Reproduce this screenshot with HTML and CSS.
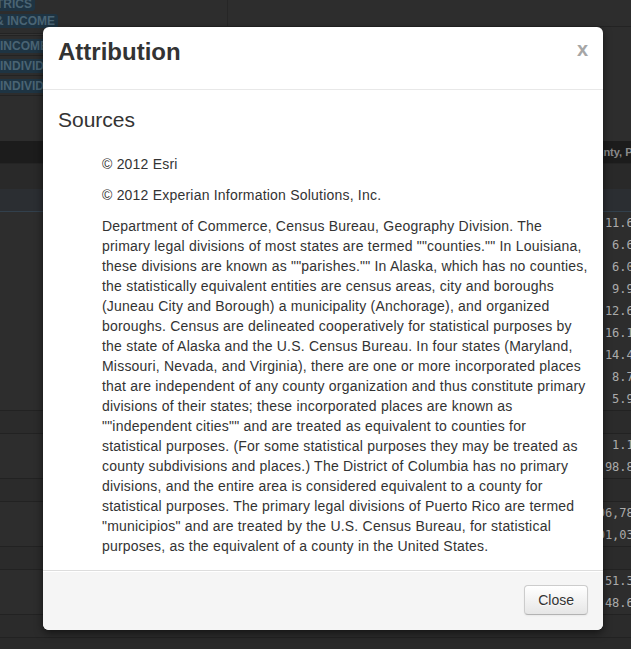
FILE: index.html
```html
<!DOCTYPE html>
<html lang="en">
<head>
<meta charset="utf-8">
<title>Attribution</title>
<link rel="stylesheet" href="styles.css">
</head>
<body>
<div class="app">
  <div class="top">
    <div class="side">
      <span class="badge b1">METRICS</span>
      <span class="badge b2">&amp; INCOME</span>
      <div class="rule double"></div>
      <span class="badge b3">INCOME</span>
      <div class="rule"></div>
      <span class="badge b3">INDIVIDUALS</span>
      <div class="rule"></div>
      <span class="badge b3">INDIVIDUALS</span>
      <div class="rule"></div>
    </div>
    <div class="top-main">
      <div class="strip"><div class="strip-left"></div><div class="strip-right"></div></div>
    </div>
  </div>
  <div class="thead"><span class="th">County, Population</span></div>
  <div class="row row-a"></div>
  <div class="row row-b"></div>
  <div class="row data"><span class="num">11.60</span></div>
  <div class="row data"><span class="num">6.64</span></div>
  <div class="row data"><span class="num">6.04</span></div>
  <div class="row data"><span class="num">9.96</span></div>
  <div class="row data"><span class="num">12.62</span></div>
  <div class="row data"><span class="num">16.10</span></div>
  <div class="row data"><span class="num">14.40</span></div>
  <div class="row data"><span class="num">8.72</span></div>
  <div class="row data"><span class="num">5.95</span></div>
  <div class="row group"></div>
  <div class="row data"><span class="num">1.14</span></div>
  <div class="row data"><span class="num">98.86</span></div>
  <div class="row group"></div>
  <div class="row data"><span class="num">$106,789</span></div>
  <div class="row data"><span class="num">$101,035</span></div>
  <div class="row group"></div>
  <div class="row data"><span class="num">51.38</span></div>
  <div class="row data"><span class="num">48.62</span></div>
  <div class="row group"></div>
  <div class="row tail"></div>
</div>

<div class="modal" role="dialog">
  <div class="modal-header">
    <h3 class="modal-title">Attribution</h3>
    <span class="close">x</span>
  </div>
  <div class="modal-body">
    <h3 class="section-title">Sources</h3>
    <ul class="sources">
      <li>© 2012 Esri</li>
      <li>© 2012 Experian Information Solutions, Inc.</li>
      <li>Department of Commerce, Census Bureau, Geography Division. The primary legal divisions of most states are termed ""counties."" In Louisiana, these divisions are known as ""parishes."" In Alaska, which has no counties, the statistically equivalent entities are census areas, city and boroughs (Juneau City and Borough) a municipality (Anchorage), and organized boroughs. Census are delineated cooperatively for statistical purposes by the state of Alaska and the U.S. Census Bureau. In four states (Maryland, Missouri, Nevada, and Virginia), there are one or more incorporated places that are independent of any county organization and thus constitute primary divisions of their states; these incorporated places are known as ""independent cities"" and are treated as equivalent to counties for statistical purposes. (For some statistical purposes they may be treated as county subdivisions and places.) The District of Columbia has no primary divisions, and the entire area is considered equivalent to a county for statistical purposes. The primary legal divisions of Puerto Rico are termed "municipios" and are treated by the U.S. Census Bureau, for statistical purposes, as the equivalent of a county in the United States.</li>
    </ul>
  </div>
  <div class="modal-footer">
    <button class="btn" type="button">Close</button>
  </div>
</div>
</body>
</html>
```

FILE: styles.css
```css
html, body {
  margin: 0;
  padding: 0;
  width: 631px;
  height: 649px;
  overflow: hidden;
  background: #2d2d2d;
}

body {
  position: relative;
  font-family: "Liberation Sans", Arial, Helvetica, sans-serif;
}

/* ---------- background application (dimmed) ---------- */
.app {
  width: 631px;
  height: 649px;
  display: flex;
  flex-direction: column;
}

.top {
  height: 141px;
  flex: none;
  display: grid;
  grid-template-columns: 70px 1fr;
}

.side {
  display: flex;
  flex-direction: column;
  align-items: flex-start;
  margin-top: -3px;
}

.badge {
  display: inline-block;
  font-size: 12px;
  font-weight: bold;
  line-height: 14px;
  padding: 0 3px;
  border-radius: 3px;
  background: #1e3443;
  color: #4a6474;
  white-space: nowrap;
}

.b1 { margin-left: -25px; }
.b2 { margin-left: -8px; margin-top: 3px; }
.b3 { margin-left: -3px; margin-top: 3px; }

.rule {
  align-self: stretch;
  height: 0;
  border-top: 1px solid #232323;
  margin-top: 2px;
}

.rule.double {
  height: 1px;
  margin-top: 5px;
  border-bottom: 1px solid #232323;
  background: #333;
}

.top-main {
  display: flex;
  flex-direction: column;
}

.strip {
  height: 26px;
  border-bottom: 1px solid #232323;
  display: flex;
}

.strip-left {
  width: 157px;
  border-right: 1px solid #262626;
}

.strip-right {
  flex: 1;
}

.thead {
  height: 22px;
  flex: none;
  background: #1c1c1c;
  display: flex;
  align-items: center;
}

.th {
  margin-left: 582px;
  font-size: 11px;
  font-weight: bold;
  color: #8a8a8a;
  white-space: nowrap;
}

.row {
  flex: none;
  display: flex;
  align-items: center;
  justify-content: flex-end;
  box-sizing: border-box;
}

.row-a {
  height: 26px;
  background: #292929;
  border-top: 1px solid #242424;
}

.row-b {
  height: 23px;
  background: #2b2e32;
  border-bottom: 1px solid #32404c;
}

.data {
  height: 22px;
  background: #2d2d2d;
}

.group {
  height: 24px;
  background: #2b2b2b;
  border-top: 1px solid #222;
  border-bottom: 1px solid #222;
}

.tail {
  flex: 1;
  background: #2a2a2a;
}

.num {
  font-family: "DejaVu Sans Mono", "Liberation Mono", monospace;
  font-size: 12px;
  color: #ababab;
  margin-right: -10px;
  white-space: nowrap;
}

/* ---------- modal ---------- */
.modal {
  position: absolute;
  left: 43px;
  top: 27px;
  width: 560px;
  background: #fff;
  border-radius: 6px;
  box-shadow: 0 3px 8px rgba(0, 0, 0, 0.55);
  color: #333;
  font-family: "Liberation Sans", Arial, Helvetica, sans-serif;
}

.modal-header {
  display: flex;
  justify-content: space-between;
  align-items: flex-start;
  padding: 5px 15px 17px;
  border-bottom: 1px solid #e8e8e8;
}

.modal-title {
  margin: 0;
  font-size: 24px;
  line-height: 40px;
  font-weight: bold;
  color: #333;
}

.close {
  margin-top: 7px;
  font-size: 20px;
  line-height: 20px;
  font-weight: bold;
  color: #a6a6a6;
  text-shadow: 0 1px 0 #fff;
  cursor: pointer;
}

.modal-body {
  padding: 15px 15px 14px;
}

.section-title {
  margin: 0;
  font-size: 21px;
  line-height: 30px;
  font-weight: normal;
  color: #333;
}

.sources {
  list-style: none;
  margin: 19px 0 0 44px;
  padding: 0;
  font-size: 14px;
  line-height: 20px;
  letter-spacing: 0.21px;
  color: #333;
}

.sources li {
  margin: 0 0 11px;
}

.sources li:last-child {
  margin-bottom: 0;
}

.modal-footer {
  padding: 14px 15px 15px;
  background: #f5f5f5;
  border-top: 1px solid #ddd;
  border-radius: 0 0 6px 6px;
  box-shadow: inset 0 1px 0 #fff;
  display: flex;
  justify-content: flex-end;
}

.btn {
  font-family: "Liberation Sans", Arial, Helvetica, sans-serif;
  font-size: 14px;
  line-height: 20px;
  padding: 4px 13px;
  color: #333;
  background: linear-gradient(#ffffff, #e6e6e6);
  border: 1px solid #cccccc;
  border-bottom-color: #b3b3b3;
  border-radius: 4px;
  box-shadow: inset 0 1px 0 rgba(255, 255, 255, 0.2), 0 1px 2px rgba(0, 0, 0, 0.05);
  text-shadow: 0 1px 1px rgba(255, 255, 255, 0.75);
  cursor: pointer;
}
```
